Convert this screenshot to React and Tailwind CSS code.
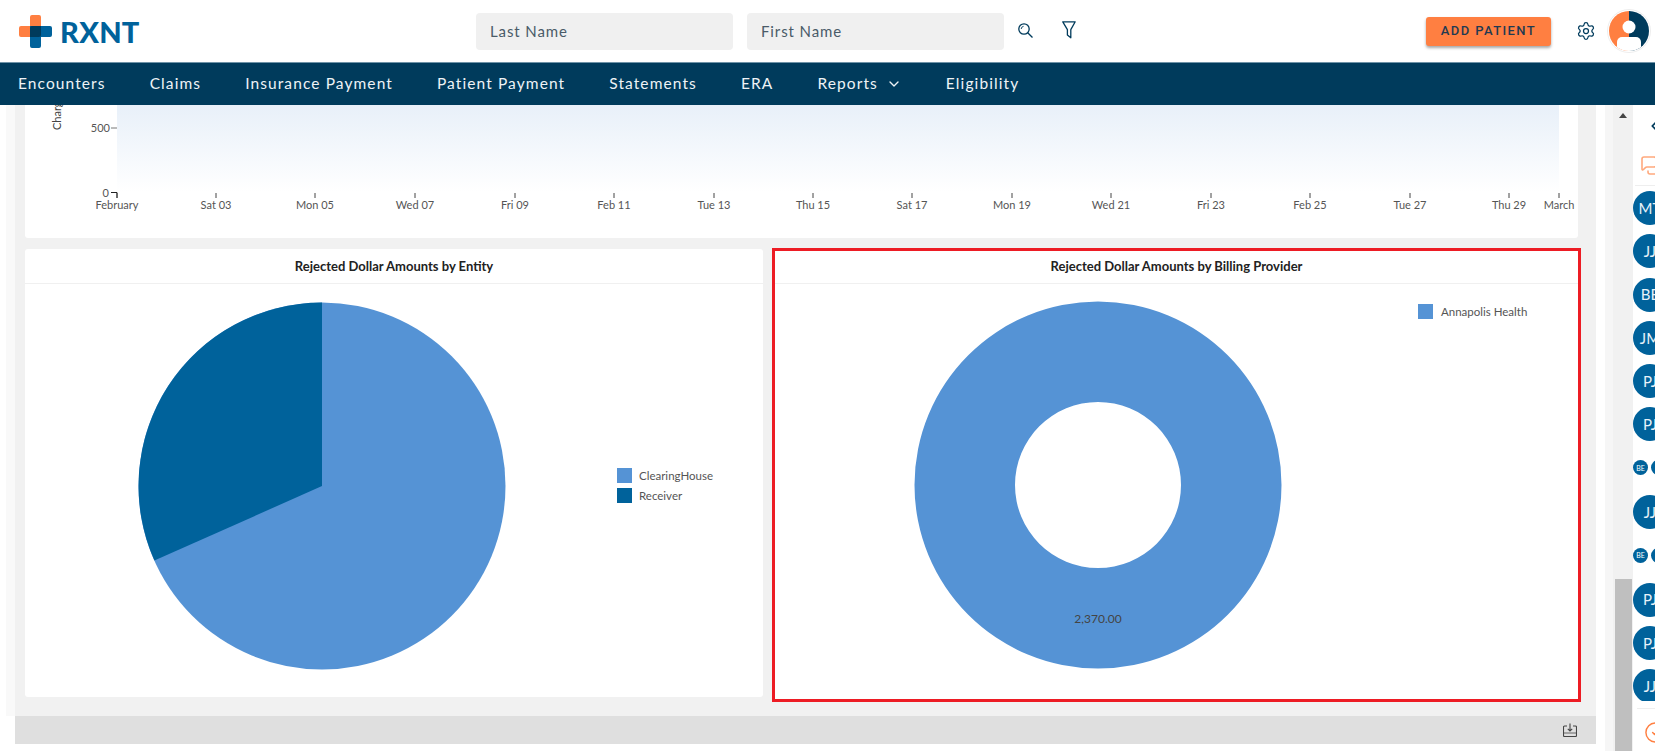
import React from 'react'
import { ChevronDown, ChevronLeft, MessagesSquare, Settings, CircleCheck } from 'lucide-react'

const navItems = ['Encounters', 'Claims', 'Insurance Payment', 'Patient Payment', 'Statements', 'ERA', 'Reports', 'Eligibility']

const ticks = [
  ['February', 117], ['Sat 03', 216], ['Mon 05', 315], ['Wed 07', 415], ['Fri 09', 515], ['Feb 11', 614],
  ['Tue 13', 714], ['Thu 15', 813], ['Sat 17', 912], ['Mon 19', 1012], ['Wed 21', 1111], ['Fri 23', 1211],
  ['Feb 25', 1310], ['Tue 27', 1410], ['Thu 29', 1509], ['March', 1559],
]

// rail rows, big = one circle, small = pair of tiny ones
const railRows = ['MT', 'JJ', 'BE', 'JM', 'PJ', 'PJ', 'small', 'JJ', 'small', 'PJ', 'PJ', 'JJ']

function Logo() {
  return (
    <div className="w-[120px] shrink-0 flex items-center">
      <svg width="33" height="33" viewBox="0 0 33 33" className="shrink-0">
        <path d="M11 2a2 2 0 0 1 2-2h7a2 2 0 0 1 2 2v20h-20a2 2 0 0 1-2-2v-7a2 2 0 0 1 2-2h9z" fill="#ff7f41" />
        <path d="M11 11h20a2 2 0 0 1 2 2v7a2 2 0 0 1-2 2h-9v9a2 2 0 0 1-2 2h-7a2 2 0 0 1-2-2z" fill="#00629b" />
        <path d="M13 11h9v9a2 2 0 0 1-2 2h-9v-9a2 2 0 0 1 2-2z" fill="#003b5c" />
      </svg>
      <span className="ml-[8px] text-[29px] font-black leading-none tracking-[0.3px] text-[#00629b]">RXNT</span>
    </div>
  )
}

function Avatar() {
  return (
    <svg width="44" height="44" viewBox="0 0 44 44" className="shrink-0">
      <defs>
        <clipPath id="avatarClip">
          <circle cx="22" cy="22" r="20" />
        </clipPath>
      </defs>
      <circle cx="22" cy="22" r="21.5" fill="#fff" stroke="#eee" />
      <g clipPath="url(#avatarClip)">
        <rect width="22" height="44" fill="#ff7f41" />
        <rect x="22" width="22" height="44" fill="#003b5c" />
        <circle cx="22" cy="18" r="6.5" fill="#fff" />
        <path d="M10 44V33a5 5 0 0 1 5-5h14a5 5 0 0 1 5 5v11z" fill="#fff" />
      </g>
    </svg>
  )
}

function PieCard() {
  return (
    <div className="w-[738px] h-[448px] mt-[11px] bg-white rounded-[3px] shrink-0">
      <div className="h-[35px] pt-[1px] border-b border-[#f0f0f0] flex items-center justify-center text-[13px] font-bold text-[#222]">
        Rejected Dollar Amounts by Entity
      </div>
      <div className="flex pl-[113px] pt-[18px]">
        <svg width="368" height="368" viewBox="0 0 368 368" className="shrink-0">
          <circle cx="184" cy="184" r="183.5" fill="#5593d5" />
          <path d="M184 184 L16.4 258.6 A183.5 183.5 0 0 1 184 0.5 Z" fill="#00629b" />
        </svg>
        <div className="ml-[111px] mt-[166px] flex flex-col gap-[5px] text-[11.5px] text-[#555]">
          <div className="flex items-center gap-[7px] h-[15px]"><span className="w-[15px] h-[15px] bg-[#5593d5]" />ClearingHouse</div>
          <div className="flex items-center gap-[7px] h-[15px]"><span className="w-[15px] h-[15px] bg-[#00629b]" />Receiver</div>
        </div>
      </div>
    </div>
  )
}

function DonutCard() {
  return (
    <div className="relative w-[809px] h-[454px] mt-[10px] ml-[9px] bg-white border-[3px] border-[#ed1c24] shrink-0">
      <div className="h-[33px] border-b border-[#f0f0f0] flex items-center justify-center text-[13px] font-bold text-[#222]">
        Rejected Dollar Amounts by Billing Provider
      </div>
      <div className="flex pl-[139px] pt-[17px]">
        <svg width="368" height="368" viewBox="0 0 368 368" className="shrink-0">
          <path fillRule="evenodd" d="M184 .5a183.5 183.5 0 1 0 0 367a183.5 183.5 0 1 0 0-367zM184 101a83 83 0 1 1 0 166a83 83 0 1 1 0-166z" fill="#5593d5" />
          <text x="184" y="322" textAnchor="middle" fontSize="12" fill="#444">2,370.00</text>
        </svg>
        <div className="ml-[136px] mt-[3px] flex items-center gap-[8px] h-[15px] text-[11.5px] text-[#555]">
          <span className="w-[15px] h-[15px] bg-[#5593d5]" />Annapolis Health
        </div>
      </div>
    </div>
  )
}

function LineCard() {
  return (
    <div className="w-[1553px] h-[133px] bg-white rounded-b-[3px]">
      <svg width="1553" height="133" viewBox="25 105 1553 133">
        <defs>
          <linearGradient id="areaFade" x1="0" y1="0" x2="0" y2="1">
            <stop offset="0" stopColor="#e8f0f9" />
            <stop offset="1" stopColor="#ffffff" />
          </linearGradient>
        </defs>
        <rect x="117" y="105" width="1442" height="87" fill="url(#areaFade)" />
        <text transform="translate(61 130) rotate(-90)" fontSize="11" fill="#444">Charg</text>
        <text x="110" y="132" textAnchor="end" fontSize="11" fill="#555">500</text>
        <line x1="111" x2="117" y1="128" y2="128" stroke="#777" />
        <text x="109" y="197" textAnchor="end" fontSize="11" fill="#555">0</text>
        <path d="M111 192.5H117V198" fill="none" stroke="#222" />
        {ticks.map(([label, x]) => (
          <g key={label}>
            <line x1={x} x2={x} y1="193" y2="198" stroke="#444" />
            <text x={x} y="209" textAnchor="middle" fontSize="11" fill="#555">{label}</text>
          </g>
        ))}
      </svg>
    </div>
  )
}

function Rail() {
  return (
    <div className="w-[22px] shrink-0 bg-white overflow-hidden flex flex-col">
      <ChevronLeft size={14} strokeWidth={3} className="ml-[14px] mt-[14px] text-[#003b5c] shrink-0" />
      <MessagesSquare size={24} strokeWidth={1.6} className="ml-[7px] mt-[22px] text-[#ffa97d] shrink-0" />
      <div className="h-px bg-[#eee] mt-[6px] mb-[5px] ml-[2px] shrink-0" />
      <div className="flex flex-col gap-[9.3px] h-[510px] overflow-hidden shrink-0">
        {railRows.map((row, i) =>
          row === 'small' ? (
            <div key={i} className="flex gap-[3px] h-[16px] my-[9.5px] shrink-0">
              <span className="w-[15px] h-[15px] rounded-full bg-[#00629b] text-white text-[7px] flex items-center justify-center shrink-0">BE</span>
              <span className="w-[15px] h-[15px] rounded-full bg-[#00629b] shrink-0" />
            </div>
          ) : (
            <span key={i} className="w-[34px] h-[34px] rounded-full bg-[#00629b] text-[#e8f2f9] text-[15px] flex items-center justify-center shrink-0">{row}</span>
          )
        )}
      </div>
      <div className="h-px bg-[#eee] mt-[7px] ml-[4px] shrink-0" />
      <CircleCheck size={23} strokeWidth={1.5} className="ml-[11px] mt-[12px] text-[#ff7f41] shrink-0" />
    </div>
  )
}

export default function App() {
  return (
    <div className="w-[1655px] h-[751px] overflow-hidden bg-white flex flex-col font-['Lato','Noto_Sans',sans-serif]">
      <header className="h-[62px] shrink-0 flex items-center pl-[19px] pr-[4px]">
        <Logo />
        <div className="ml-[337px] flex gap-[14px]">
          <div className="w-[257px] h-[37px] rounded-[4px] bg-[#f0f0f0] pl-[14px] flex items-center text-[15px] tracking-[0.9px] text-[#4a5b68]">Last Name</div>
          <div className="w-[257px] h-[37px] rounded-[4px] bg-[#f0f0f0] pl-[14px] flex items-center text-[15px] tracking-[0.9px] text-[#4a5b68]">First Name</div>
        </div>
        <svg width="15" height="15" viewBox="0 0 15 15" fill="none" stroke="#003b5c" strokeWidth="1.3" className="ml-[14px] mb-[2px] shrink-0">
          <circle cx="6" cy="6" r="5.2" />
          <path d="M9.7 9.7l4.8 4.8" />
          <path d="M3.2 6a2.8 2.8 0 0 1 2.4-2.7" strokeWidth="0.9" />
        </svg>
        <svg width="14" height="18" viewBox="0 0 14 18" fill="none" stroke="#003b5c" strokeWidth="1.3" strokeLinejoin="round" className="ml-[29px] mb-[2px] shrink-0">
          <path d="M.8.8h12.4L8.8 8.6v8.2L5.4 14V8.6z" />
        </svg>
        <button className="ml-auto w-[125px] h-[29px] rounded-[3px] bg-[#ff7f41] shadow-[0_2px_3px_rgba(0,0,0,0.35)] font-['Roboto',sans-serif] text-[13px] font-medium tracking-[1.4px] text-[#1f3a52]">ADD PATIENT</button>
        <Settings size={20} strokeWidth={1.5} className="ml-[25px] text-[#003b5c] shrink-0" />
        <div className="ml-[11px]"><Avatar /></div>
      </header>

      <nav className="h-[43px] shrink-0 bg-[#003b5c] border-t border-[#6f93a8] flex items-center gap-[44px] pl-[18px] text-[15.5px] tracking-[1.1px] text-[#eef3f6]">
        {navItems.map((item) =>
          item === 'Reports' ? (
            <span key={item} className="flex items-center gap-[8px]">{item}<ChevronDown size={16} /></span>
          ) : (
            <span key={item}>{item}</span>
          )
        )}
      </nav>

      <div className="flex-1 flex min-h-0">
        <div className="w-[1605px] shrink-0 flex flex-col">
          <div className="flex h-[611px]">
            <div className="w-[6px] bg-white" />
            <div className="w-[9px] bg-[#f9f9f9]" />
            <div className="w-[1581px] bg-[#f1f1f1] pl-[10px]">
              <LineCard />
              <div className="flex">
                <PieCard />
                <DonutCard />
              </div>
            </div>
          </div>
          <div className="ml-[15px] w-[1581px] h-[28px] bg-[#dfdfdf] flex items-center justify-end pr-[19px]">
            <svg width="14" height="14" viewBox="0 0 14 14" fill="none" stroke="#444" strokeWidth="1.1">
              <path d="M4 3H1.5a1 1 0 0 0-1 1v8.5a1 1 0 0 0 1 1h11a1 1 0 0 0 1-1V4a1 1 0 0 0-1-1H10" />
              <path d="M7 .5v7.5M4.8 5.8L7 8l2.2-2.2" />
              <path d="M.5 10h13" strokeWidth="0.8" />
            </svg>
          </div>
        </div>

        <div className="w-[28px] shrink-0 flex">
          <div className="w-[8px] bg-[#f6f6f6]" />
          <div className="w-[20px] bg-[#f1f1f1] flex flex-col items-center">
            <span className="mt-[8px] w-0 h-0 border-x-[4px] border-x-transparent border-b-[5px] border-b-[#444]" />
            <div className="mt-[461px] w-[17px] flex-1 bg-[#bfbfbf]" />
          </div>
        </div>

        <Rail />
      </div>
    </div>
  )
}
